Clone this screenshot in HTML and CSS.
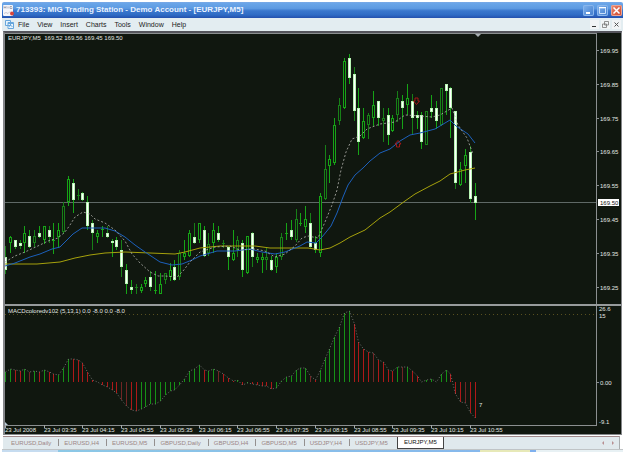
FILE: index.html
```html
<!DOCTYPE html>
<html lang="en">
<head>
<meta charset="utf-8">
<title>713393: MIG Trading Station</title>
<link rel="stylesheet" href="styles.css">
</head>
<body>
<div class="window">
  <header class="titlebar">
    <svg class="app-icon" width="11" height="11" viewBox="0 0 11 11" aria-hidden="true">
      <rect width="10" height="11" rx="1" fill="#f6f6fa"/>
      <path d="M1 3.5V1.5L2 3l1-1.500v2M5 1.500v2M9 1.500H7v2h2v-1" fill="none" stroke="#8e8e9c" stroke-width=".7"/>
      <path d="M1 8.500l2-1 2 1 2-2" fill="none" stroke="#c9c9d2"/>
      <circle cx="9" cy="8.500" r="2" fill="#d9453c"/>
    </svg>
    <h1 class="title">713393: MIG Trading Station - Demo Account - [EURJPY,M5]</h1>
    <div class="win-buttons">
      <button class="win-btn" aria-label="Minimize"><svg width="11" height="11"><path d="M3 8h4" stroke="#fff" stroke-width="2"/></svg></button>
      <button class="win-btn" aria-label="Maximize"><svg width="11" height="11"><path d="M2.500 3h6v5.500h-6z" fill="none" stroke="#c9e0fb"/><path d="M2 2.500h7" stroke="#fff"/></svg></button>
      <button class="win-btn close" aria-label="Close"><svg width="11" height="11"><path d="M2.500 2.500l6 6M8.500 2.500l-6 6" stroke="#fff" stroke-width="1.500"/></svg></button>
    </div>
  </header>
  <nav class="menubar">
    <svg class="doc-icon" width="9" height="9" viewBox="0 0 9 9" aria-hidden="true">
      <path d="M.5.5h5v5h-5zM3 2.500h5.500v6H3z" fill="#e8f4fd" stroke="#67a6dc"/>
      <path d="M3 3.500h5.500M4 6.500l1.500-1 2 1" fill="none" stroke="#67a6dc"/>
    </svg>
    <button>File</button><button>View</button><button>Insert</button><button>Charts</button><button>Tools</button><button>Window</button><button>Help</button>
    <div class="doc-buttons">
      <button aria-label="Minimize chart"><svg width="9" height="9"><path d="M2 6.500h4" stroke="#333"/></svg></button>
      <button aria-label="Restore chart"><svg width="9" height="9"><path d="M3.500 1.500h4v3.500h-4zM1.500 4h4v3.500h-4z" fill="none" stroke="#777" stroke-width=".8"/></svg></button>
      <button aria-label="Close chart"><svg width="9" height="9"><path d="M2.500 2.500l4 4M6.500 2.500l-4 4" stroke="#555"/></svg></button>
    </div>
  </nav>
  <main class="workspace">
    <div class="row price-row">
      <svg class="plot" id="price" role="img" aria-label="EURJPY candlestick chart"></svg>
      <svg class="axis" id="price-axis"></svg>
    </div>
    <div class="divider"></div>
    <div class="row macd-row">
      <svg class="plot" id="macd" role="img" aria-label="MACD histogram"></svg>
      <svg class="axis" id="macd-axis"></svg>
    </div>
    <svg class="time-axis" id="time-axis"></svg>
  </main>
  <footer class="tabs">
    <button>EURUSD,Daily</button><button>EURUSD,H4</button><button>EURUSD,M5</button><button>GBPUSD,Daily</button><button>GBPUSD,H4</button><button>GBPUSD,M5</button><button>USDJPY,H4</button><button>USDJPY,M5</button><button class="active">EURJPY,M5</button>
    <div class="scroll"><button aria-label="Scroll left"><svg width="3" height="4"><path d="M2 0v4L0 2z" fill="#b78f92"/></svg></button><button aria-label="Scroll right"><svg width="3" height="4"><path d="M0 0v4l2-2z" fill="#b78f92"/></svg></button></div>
  </footer>
  <div class="status"><span class="s-pale"></span><span class="s-sky"></span><span class="s-yellow"></span><span class="s-blue"></span><span class="s-end"></span></div>
</div>
<script src="chart.js"></script>
</body>
</html>
```
FILE: styles.css
```css
* { box-sizing: border-box; }
body {
  margin: 0;
  padding: 2px 2px 0;
  background: #fff;
  font-family: "Liberation Sans", Arial, sans-serif;
  overflow: hidden;
}
button {
  border: 0;
  padding: 0;
  margin: 0;
  background: none;
  font: inherit;
  color: inherit;
  line-height: inherit;
}
svg { display: block; }
.window { display: flex; flex-direction: column; min-height: calc(100vh - 2px); }
.titlebar {
  display: flex;
  align-items: center;
  gap: 2px;
  height: 16px;
  padding: 0 1px;
  border-radius: 2px 2px 0 0;
  background: linear-gradient(#7aa9e6 0, #69a5e8 10%, #5d9ae2 40%, #3a77cd 55%, #2f6cc5 80%, #2350ad 100%);
}
.title {
  flex: 1;
  margin: 0;
  font: bold 8px/14px "Liberation Sans", sans-serif;
  color: #e9f2ff;
  white-space: nowrap;
}
.win-buttons { display: flex; gap: 3px; }
.win-btn {
  width: 11px;
  height: 11px;
  border-radius: 2px;
  background: linear-gradient(135deg, #84b5ee, #3d79cb);
  box-shadow: inset 0 0 0 1px #8ab6ec;
}
.win-btn.close { background: linear-gradient(135deg, #e88a72, #cf4529); box-shadow: inset 0 0 0 1px #eba493; }
.menubar {
  display: flex;
  align-items: center;
  gap: 8px;
  height: 13px;
  padding: 0 2px 0 3px;
  background: #e3edf1;
  font-size: 7px;
  line-height: 12px;
  color: #222;
}
.doc-icon { margin-right: -4px; }
.doc-buttons { display: flex; gap: 2px; margin-left: auto; }
.doc-buttons button { background: #f1f4f6; width: 9px; height: 9px; }
.workspace {
  margin: 0 1px;
  border: solid #85878a;
  border-width: 2px 1px 1px 2px;
  border-top-color: #55555c;
  background: #10170f;
}
.row { display: flex; }
.plot { flex: 1; min-width: 0; border-right: 1px solid #8b8f90; }
.axis { width: 24px; flex: none; overflow: visible; }
.price-row, .price-row svg { height: 271px; }
.price-row .plot { border-top: 1px solid #8b8f90; }
.divider { height: 2px; background: #979b9c; }
.macd-row, .macd-row svg { height: 119px; }
.time-axis { width: calc(100% - 24px); height: 9px; overflow: visible; }
.workspace text {
  font-size: 6px;
  fill: #e2e6e2;
}
.workspace .current { fill: #111; }
.tabs {
  display: flex;
  align-items: stretch;
  height: 13px;
  margin: 1px 3px 0 1px;
  padding-left: 2px;
  border-top: 1px solid #a0898b;
  border-right: 1px solid #a8acae;
  background: #e0e9ed;
  font-size: 6px;
  line-height: 11px;
  color: #9b8585;
}
.tabs > button { position: relative; padding: 0 7px 0 6px; white-space: nowrap; }
.tabs > button + button::before {
  content: "";
  position: absolute;
  left: 0;
  top: 2px;
  width: 1px;
  height: 7px;
  background: #94908f;
}
.tabs > .active {
  background: #fff;
  color: #111;
  border: solid #444;
  border-width: 0 1px 1px;
  padding: 0 6px;
  margin-left: 2px;
}
.tabs > .active::before { display: none; }
.scroll { display: flex; align-items: center; gap: 7px; margin-left: auto; padding-right: 4px; }
.status { display: flex; height: 3px; border-top: 1px solid #c0c4c6; }
.status span { height: 2px; }
.s-pale { width: 9%; background: #c6dcf0; }
.s-sky { width: 68%; background: linear-gradient(90deg, #8cc8e6, #86b8ec); }
.s-yellow { width: 8%; background: #e7e9b8; }
.s-blue { width: 1%; background: #7fb0ee; }
.s-end { flex: 1; background: #e8f1f4; }
```
FILE: chart.js
```js
const FIRST = 0.5, STEP = 4.842, LEFT = 5, TOP = 34, MACD_TOP = 306, ZERO = 382;
const x = i => Math.round(FIRST + STEP * i - 0.5) + 0.5;

// Each bar: high, body top, body bottom, low, falling (1) or rising (0).
const bars = `246 257 270 274 1|236 237 243 253 0|240 240 247 249 1|240 243 246 249 1|226 233 243 253 0|230 236 247 248 1|230 236 243 247 0|226 233 237 238 1|226 226 240 244 0|226 230 237 243 1|223 240 241 254 0|223 230 237 248 0|202 206 232 234 0|176 179 202 206 0|179 183 200 213 1|189 195 196 200 0|192 193 200 201 1|196 202 226 230 1|220 223 233 250 1|230 233 237 243 0|226 229 230 237 0|226 233 237 238 1|239 241 243 257 1|237 240 247 250 1|240 250 267 277 1|264 270 284 294 1|280 287 290 294 1|284 287 288 294 0|284 287 291 293 0|277 280 284 287 0|271 277 287 291 1|271 290 291 294 0|273 284 294 294 0|273 273 280 284 0|263 270 277 281 0|260 267 280 281 1|250 253 277 280 0|240 253 257 260 0|230 233 256 257 0|223 237 243 244 1|223 223 240 243 0|226 230 256 257 1|233 244 253 256 0|223 230 243 253 0|226 233 240 242 1|240 243 244 248 0|246 247 257 270 1|230 253 260 261 0|236 240 250 257 0|240 243 270 277 1|236 236 273 274 0|232 233 257 267 1|253 257 260 263 0|253 257 260 273 0|247 257 260 270 0|256 260 270 271 1|253 257 267 273 0|233 237 257 260 0|223 233 234 240 0|220 230 237 240 1|209 219 240 242 0|213 223 224 226 0|206 219 227 233 0|213 223 247 248 1|236 243 250 253 1|193 196 253 257 0|145 169 199 200 0|155 159 166 183 0|118 125 163 165 0|98 105 121 125 0|58 61 108 109 0|54 58 78 84 1|67 74 111 121 1|88 108 142 155 1|108 121 138 139 0|113 115 125 139 0|91 105 118 126 0|101 101 118 126 1|108 118 121 142 0|108 115 135 145 1|115 118 131 132 0|91 98 115 122 0|95 101 108 129 1|84 98 105 115 0|94 101 118 135 1|111 115 118 129 1|112 115 142 149 1|111 111 145 145 0|95 108 112 118 1|101 108 121 129 1|88 88 125 126 0|84 84 91 115 1|87 88 108 138 1|111 111 183 189 1|162 169 185 186 0|149 155 166 183 0|146 152 199 203 1|183 196 203 220 1`
  .split('|').map(r => r.split(' ').map(Number));

const averages = {
  yellow: '5,264 25,264 37,264 60,262 75,258 90,255 105,253 125,252 150,253 175,254 185,252 200,248 220,246 255,246 270,248 308,248 320,250 330,248 340,243 350,237 365,230 380,218 390,212 405,201 415,194 430,186 440,181 450,174 465,170 475,168',
  blue: '5,266 15,263 30,257 40,254 52,249 60,247 66,241 73,234 82,228 105,228 115,231 125,237 135,245 145,252 160,262 172,265 182,264 192,260 200,256 217,251 235,251 250,249 262,252 275,254 285,252 300,246 307,242 316,243 322,237 331,226 337,213 343,197 348,185 355,175 363,168 370,161 380,153 390,149 400,141 410,135 420,133 435,129 450,120 456,126 468,134 475,143',
  white: '5,262 15,256 25,252 40,245 48,241 58,238 65,232 70,225 75,217 83,212 90,214 95,219 105,223 115,230 125,241 132,254 140,263 150,272 158,276 165,276 177,277 183,271 190,262 200,252 215,247 230,246 240,250 255,249 265,251 275,257 285,254 295,246 302,238 308,236 318,238 325,222 332,205 337,190 341,170 346,152 352,139 360,136 367,129 380,124 395,122 405,115 420,116 432,117 440,115 452,108 458,125 467,138 473,154'
};

// MACD histogram: height level and colour (g, r, or darker d).
const macd = '372g 369g 370r 371r 369g 372d 371g 372r 370g 372r 374r 375g 368g 359g 359r 360r 363r 372r 380r 382r 385r 387r 390r 393r 400d 406d 410r 411r 409g 407g 404g 404g 401g 395g 391g 390g 385g 379g 371g 369g 365g 370r 371g 369g 371d 374r 378r 381r 380g 385r 383g 384r 385r 386r 386r 389r 388g 381g 377g 376g 370g 368g 368g 376d 380r 370g 358g 349g 337g 327g 313g 311g 324r 342r 349r 352r 353d 360r 362r 370r 371r 367g 367d 367g 371r 376r 382r 380g 379g 382r 374g 370g 374r 394r 402r 403d 413r 418r'
  .split(' ').map(v => [parseInt(v, 10), v.slice(-1)]);

const line = (x1, y1, x2, y2, c, extra = '') =>
  `<line x1="${x1}" y1="${y1}" x2="${x2}" y2="${y2}" stroke="${c}" ${extra}/>`;
const text = (px, py, s, cls = '') => `<text class="${cls}" x="${px}" y="${py}">${s}</text>`;
const put = (id, s) => { document.getElementById(id).innerHTML = s; };

const curve = (pts, c, extra = '') =>
  `<polyline transform="translate(${-LEFT} ${-TOP})" points="${pts}" fill="none" stroke="${c}" ${extra}/>`;

let price = line(0, 202.5 - TOP, '100%', 202.5 - TOP, '#5f6966');
bars.forEach(([h, t, b, l, down], i) => {
  const cx = x(i), green = i % 3 ? '#16a416' : '#178017';
  price += line(cx, h - TOP, cx, l - TOP, green);
  price += b - t < 2
    ? line(cx - 1.5, t - TOP + .5, cx + 1.5, t - TOP + .5, green)
    : `<rect x="${cx - 1}" y="${t - TOP + .5}" width="2" height="${b - t - 1}" fill="${down ? '#fff' : '#10170f'}" stroke="${down ? '#b8f5b4' : green}"/>`;
});
price += curve(averages.yellow, '#a5a10c');
price += curve(averages.blue, '#1c60bb');
price += curve(averages.white, '#b4b4ae', 'stroke-dasharray="2 2" stroke-width=".8"');
const arrow = (ax, ay, s) => `<path transform="translate(${ax} ${ay - TOP}) scale(1 ${s})" d="M-1.500-3v3H-3L0 3.500 3 0H1.500v-3z" fill="none" stroke="#c41818" stroke-width=".8"/>`;
price += arrow(411.500, 101, 1) + arrow(393, 144, -1);
price += `<path d="M470 0h6l-3 3z" fill="#a9b1b5"/>` + text(3, 6, 'EURJPY,M5&#160; 169.52 169.56 169.45 169.50');
put('price', price);

let axis = '';
['169.95', '169.85', '169.75', '169.65', '169.55', '169.45', '169.35', '169.25'].forEach((s, i) => {
  const y = Math.round(17 + 33.8 * i);
  axis += line(0, y + .5, 2, y + .5, '#8b8f90') + text(3, y + 3, s);
});
axis += '<rect x="1" y="166" width="21" height="7" fill="#fff"/>' + text(3, 172, '169.50', 'current');
put('price-axis', axis);

let m = line(0, 8.5, '100%', 8.5, '#59501f', 'stroke-dasharray="1 3"');
const colours = { g: '#169016', r: '#ad1919', d: '#712525' };
macd.forEach(([y, c], i) => { m += line(x(i), ZERO - MACD_TOP, x(i), y - MACD_TOP, colours[c]); });
m += `<polyline points="${macd.map(([y], i) => x(i) + ',' + (y - MACD_TOP)).join(' ')}" fill="none" stroke="#868686" stroke-width=".8" stroke-dasharray="1 2"/>`;
m += text(3, 7, 'MACDcoloredv102 (5,13,1) 0.0 -8.0 0.0 -8.0') + text(474, 101, '7');
m += '<path d="M0 116l3 3H0z" fill="#b9cbd8"/>';
put('macd', m);
put('macd-axis', text(2, 5, '26.6') + text(2, 12, '15') + line(0, 76.5, 2, 76.5, '#8b8f90') + text(3, 79, '0.00') + text(2, 118, '-9.1'));

const times = ['23 Jul 2008', '03:35', '04:15', '04:55', '05:35', '06:15', '06:55', '07:35', '08:15', '08:55', '09:35', '10:15', '10:55'];
let t = line(0, .5, '100%', .5, '#8b8f90');
times.forEach((s, i) => {
  const px = x(i * 8);
  t += line(px, 0, px, 3, '#a5a9a8') + text(Math.round(px) - 1, 7, i ? '23 Jul ' + s : s);
});
put('time-axis', t);
```
